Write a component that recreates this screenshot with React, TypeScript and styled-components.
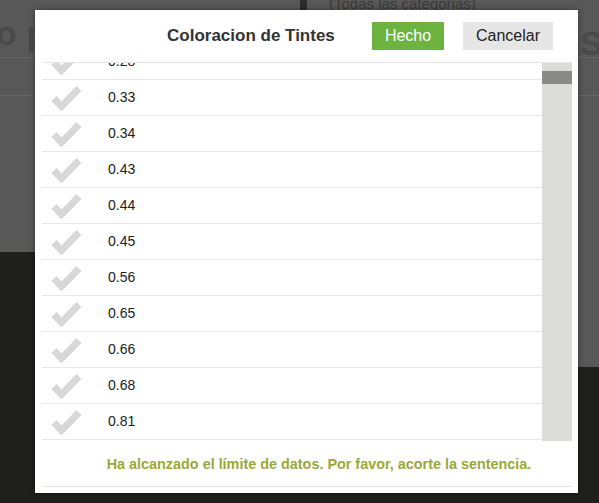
import React from "react";
import styled, { createGlobalStyle } from "styled-components";

const GlobalStyle = createGlobalStyle`
  html, body {
    margin: 0;
    padding: 0;
    background: #1f201e;
    font-family: "Liberation Sans", Arial, sans-serif;
  }
`;

const values = ["0.28", "0.33", "0.34", "0.43", "0.44", "0.45", "0.56", "0.65", "0.66", "0.68", "0.81"];

const ROW_HEIGHT = 36;
const SCROLL_OFFSET = 19;

function CheckIcon() {
  return (
    <svg width="31" height="26" viewBox="0 0 31 26">
      <path
        d="M3 13.5 L10.5 21.5 L28 3.5"
        fill="none"
        stroke="#d8d8d8"
        strokeWidth="7"
        strokeLinejoin="miter"
      />
    </svg>
  );
}

export default function App() {
  return (
    <>
      <GlobalStyle />
      <Screen>
        <Backdrop>
          <PageTop>
            <PageHeading>o p</PageHeading>
            <CategoryBar>
              <CategoryMark />
              <CategoryText>(Todas las categorias)</CategoryText>
            </CategoryBar>
            <SideHeading>Si</SideHeading>
            <PageRule $top={57} />
            <PageRule $top={95} />
          </PageTop>
          <PageBottom>
            <SideStrip />
          </PageBottom>
        </Backdrop>

        <Modal>
          <Header>
            <Title>Coloracion de Tintes</Title>
            <Actions>
              <Button $primary $width={72}>Hecho</Button>
              <Button $width={90}>Cancelar</Button>
            </Actions>
          </Header>

          <ListArea>
            <Viewport>
              <Rows style={{ marginTop: -SCROLL_OFFSET }}>
                {values.map((value) => (
                  <Row key={value}>
                    <CheckIcon />
                    <Value>{value}</Value>
                  </Row>
                ))}
              </Rows>
            </Viewport>
            <ScrollTrack>
              <ScrollThumb />
            </ScrollTrack>
          </ListArea>

          <Message>Ha alcanzado el límite de datos. Por favor, acorte la sentencia.</Message>
        </Modal>
      </Screen>
    </>
  );
}

const Screen = styled.div`
  position: relative;
  width: 599px;
  height: 503px;
  overflow: hidden;
  background: #1f201e;
`;

const Backdrop = styled.div`
  display: flex;
  flex-direction: column;
`;

const PageTop = styled.div`
  position: relative;
  height: 252px;
  background: #585858;
`;

const PageHeading = styled.div`
  position: absolute;
  left: -4px;
  top: 14px;
  font-size: 34px;
  font-weight: bold;
  color: #4a4a4a;
`;

const SideHeading = styled.div`
  position: absolute;
  left: 580px;
  top: 24px;
  font-size: 34px;
  font-weight: bold;
  color: #4a4a4a;
`;

const CategoryBar = styled.div`
  position: absolute;
  left: 300px;
  top: -6px;
  display: flex;
  align-items: center;
  gap: 22px;
`;

const CategoryMark = styled.div`
  width: 7px;
  height: 18px;
  background: #2c2c2c;
`;

const CategoryText = styled.span`
  font-size: 15px;
  color: #3a3a3a;
`;

const PageRule = styled.div<{ $top: number }>`
  position: absolute;
  left: 0;
  right: 0;
  top: ${({ $top }) => $top}px;
  height: 1px;
  background: #666;
`;

const PageBottom = styled.div`
  display: flex;
  justify-content: flex-end;
`;

const SideStrip = styled.div`
  width: 21px;
  height: 115px;
  background: #585858;
`;

const Modal = styled.div`
  position: absolute;
  left: 35px;
  top: 10px;
  width: 543px;
  height: 483px;
  box-sizing: border-box;
  padding: 0 6px 6px 7px;
  background: #fff;
  box-shadow: 0 0 6px rgba(0, 0, 0, 0.4);
  display: flex;
  flex-direction: column;
`;

const Header = styled.div`
  height: 52px;
  display: flex;
  align-items: center;
  padding-left: 125px;
  padding-right: 19px;
  border-bottom: 1px solid #e6e6e6;
`;

const Title = styled.h1`
  margin: 0;
  font-size: 17px;
  font-weight: bold;
  color: #333;
`;

const Actions = styled.div`
  margin-left: auto;
  display: flex;
  gap: 19px;
`;

const Button = styled.button<{ $primary?: boolean; $width: number }>`
  width: ${({ $width }) => $width}px;
  height: 28px;
  padding: 0;
  border: none;
  border-radius: 0;
  font-family: "Liberation Sans", Arial, sans-serif;
  font-size: 16px;
  color: ${({ $primary }) => ($primary ? "#fff" : "#222")};
  background: ${({ $primary }) => ($primary ? "#6cb33f" : "#e6e6e6")};
  cursor: pointer;
`;

const ListArea = styled.div`
  height: 378px;
  display: flex;
`;

const Viewport = styled.div`
  flex: 1;
  overflow: hidden;
`;

const Rows = styled.ul`
  margin: 0;
  padding: 0;
  list-style: none;
`;

const Row = styled.li`
  height: ${ROW_HEIGHT}px;
  box-sizing: border-box;
  display: flex;
  align-items: center;
  gap: 26px;
  padding-left: 9px;
  border-bottom: 1px solid #e8e8e8;
`;

const Value = styled.span`
  font-size: 14px;
  color: #222;
  margin-top: -1px;
`;

const ScrollTrack = styled.div`
  width: 30px;
  background: #dcdddb;
  padding-top: 8px;
  box-sizing: border-box;
`;

const ScrollThumb = styled.div`
  height: 13px;
  background: #8a8b89;
`;

const Message = styled.div`
  flex: 1;
  display: flex;
  align-items: center;
  justify-content: center;
  padding-left: 24px;
  border-bottom: 1px solid #e6e6e6;
  font-size: 14.4px;
  font-weight: bold;
  color: #9aa83a;
`;
